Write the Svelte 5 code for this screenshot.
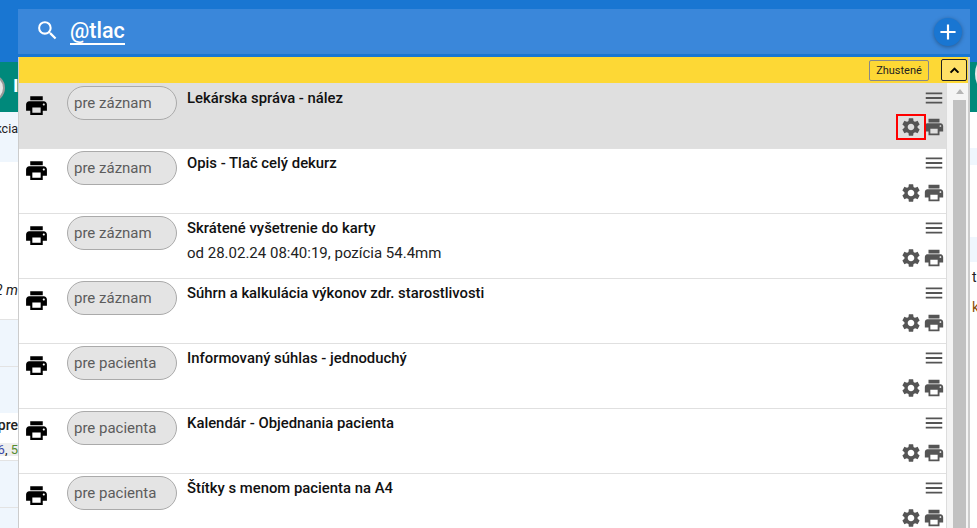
<script>
	const printer = 'M19 8H5c-1.66 0-3 1.34-3 3v6h4v4h12v-4h4v-6c0-1.66-1.34-3-3-3zm-3 11H8v-5h8v5zm3-7c-.55 0-1-.45-1-1s.45-1 1-1 1 .45 1 1-.45 1-1 1zm-1-9H6v4h12V3z';
	const gear = 'M19.14 12.94c.04-.3.06-.61.06-.94 0-.32-.02-.64-.07-.94l2.03-1.58c.18-.14.23-.41.12-.61l-1.92-3.32c-.12-.22-.37-.29-.59-.22l-2.39.96c-.5-.38-1.03-.7-1.62-.94l-.36-2.54c-.04-.24-.24-.41-.48-.41h-3.84c-.24 0-.43.17-.47.41l-.36 2.54c-.59.24-1.13.57-1.62.94l-2.39-.96c-.22-.08-.47 0-.59.22L2.74 8.87c-.12.21-.08.47.12.61l2.03 1.58c-.05.3-.09.63-.09.94s.02.64.07.94l-2.03 1.58c-.18.14-.23.41-.12.61l1.92 3.32c.12.22.37.29.59.22l2.39-.96c.5.38 1.03.7 1.62.94l.36 2.54c.05.24.24.41.48.41h3.84c.24 0 .44-.17.47-.41l.36-2.54c.59-.24 1.13-.56 1.62-.94l2.39.96c.22.08.47 0 .59-.22l1.92-3.32c.12-.22.07-.47-.12-.61l-2.01-1.58zM12 15.6c-1.98 0-3.6-1.62-3.6-3.6s1.62-3.6 3.6-3.6 3.6 1.62 3.6 3.6-1.62 3.6-3.6 3.6z';
	const menu = 'M3 18h18v-2H3v2zm0-5h18v-2H3v2zm0-7v2h18V6H3z';

	const rows = [
		{ tag: 'pre záznam', title: 'Lekárska správa - nález', active: true },
		{ tag: 'pre záznam', title: 'Opis - Tlač celý dekurz' },
		{ tag: 'pre záznam', title: 'Skrátené vyšetrenie do karty', sub: 'od 28.02.24 08:40:19, pozícia 54.4mm' },
		{ tag: 'pre záznam', title: 'Súhrn a kalkulácia výkonov zdr. starostlivosti' },
		{ tag: 'pre pacienta', title: 'Informovaný súhlas - jednoduchý' },
		{ tag: 'pre pacienta', title: 'Kalendár - Objednania pacienta' },
		{ tag: 'pre pacienta', title: 'Štítky s menom pacienta na A4' }
	];
</script>

<div class="page">
	<div class="backdrop">
		<div class="appbar"></div>
		<div class="teal">
			<span class="avatar"></span>
			<span class="initial">I</span>
			<span class="avatar-right"></span>
		</div>
		<div class="columns">
			<div class="col-left">
				<div class="cell blue h50 end top">Reakcia</div>
				<div class="cell h157 end italic">12 m</div>
				<div class="cell blue h47 line"></div>
				<div class="cell blue h47 line"></div>
				<div class="cell h30 end bold">pre</div>
				<div class="cell grey h13 end small"><span class="c1">6</span>,&nbsp;<span class="c2">5</span></div>
				<div class="cell h4"></div>
				<div class="cell blue h47 line"></div>
				<div class="cell blue h21 line"></div>
			</div>
			<div class="col-right">
				<div class="cell h36"></div>
				<div class="cell blue h17"></div>
				<div class="cell h72"></div>
				<div class="cell blue h25"></div>
				<div class="cell h30 letter">t</div>
				<div class="cell h30 letter brown">k</div>
			</div>
		</div>
	</div>

	<div class="overlay">
		<div class="search">
			<svg class="search-icon" viewBox="0 0 24 24"><path d="M15.5 14h-.79l-.28-.27A6.47 6.47 0 0 0 16 9.5 6.5 6.5 0 1 0 9.5 16c1.61 0 3.09-.59 4.23-1.57l.27.28v.79l5 4.99L20.49 19l-4.99-5zm-6 0C7.01 14 5 11.99 5 9.5S7.01 5 9.5 5 14 7.01 14 9.5 11.99 14 9.5 14z" /></svg>
			<span class="query">@tlac</span>
			<button class="add" aria-label="Pridať">
				<svg viewBox="0 0 24 24"><path d="M19 13h-6v6h-2v-6H5v-2h6V5h2v6h6v2z" /></svg>
			</button>
		</div>

		<div class="panel">
			<div class="toolbar">
				<button class="dense">Zhustené</button>
				<button class="collapse" aria-label="Zbaliť">
					<svg viewBox="0 0 24 24"><path d="M12 8l-6 6 1.41 1.41L12 10.83l4.59 4.58L18 14z" /></svg>
				</button>
			</div>
			<div class="content">
				<div class="list">
					{#each rows as row}
						<div class="row" class:active={row.active}>
							<svg class="print-main" viewBox="0 0 24 24"><path d={printer} /></svg>
							<span class="pill">{row.tag}</span>
							<div class="text">
								<div class="title">{row.title}</div>
								{#if row.sub}<div class="sub">{row.sub}</div>{/if}
							</div>
							<div class="actions">
								<svg class="tool menu" viewBox="0 0 24 24"><path d={menu} /></svg>
								<div class="tools">
									<span class="gear" class:marked={row.active}>
										<svg class="tool" viewBox="0 0 24 24"><path d={gear} /></svg>
									</span>
									<svg class="tool print" viewBox="0 0 24 24"><path d={printer} /></svg>
								</div>
							</div>
						</div>
					{/each}
				</div>
				<div class="scrollbar">
					<span class="arrow"></span>
					<div class="thumb"></div>
				</div>
			</div>
		</div>
	</div>
</div>

<style>
	:global(body) {
		margin: 0;
		font-family: Roboto, 'Liberation Sans', sans-serif;
	}

	.page {
		position: relative;
		height: 528px;
		overflow: hidden;
		background: #fff;
	}

	.appbar {
		height: 62px;
		background: #1976d2;
	}

	.teal {
		position: relative;
		height: 50px;
		background: #00897b;
	}

	.avatar {
		position: absolute;
		left: -23px;
		top: 12px;
		width: 24px;
		height: 24px;
		border: 2px solid #999;
		border-radius: 50%;
		background: #e6e6e6;
	}

	.avatar-right {
		position: absolute;
		right: -24px;
		top: -6px;
		width: 26px;
		height: 36px;
		border-radius: 50%;
		background: #e8e8e8;
	}

	.initial {
		position: absolute;
		left: 13px;
		top: 14px;
		color: #fff;
		font-size: 19px;
		font-weight: 700;
		line-height: 19px;
	}

	.columns {
		display: flex;
		justify-content: space-between;
		font-size: 12.5px;
	}

	.col-left {
		width: 18px;
	}

	.col-right {
		width: 7px;
	}

	.cell {
		display: flex;
		align-items: center;
		white-space: nowrap;
		overflow: hidden;
		box-sizing: border-box;
		color: #222;
	}

	.end {
		justify-content: flex-end;
	}

	.top {
		align-items: flex-start;
		padding-top: 9px;
	}

	.blue {
		background: #eff6fd;
	}

	.grey {
		background: #eee;
	}

	.line {
		border-top: 1px solid #e3e3e3;
	}

	.h4 { height: 4px; }
	.h13 { height: 13px; }
	.h17 { height: 17px; }
	.h21 { height: 21px; }
	.h25 { height: 25px; }
	.h30 { height: 30px; }
	.h36 { height: 36px; }
	.h47 { height: 47px; }
	.h50 { height: 50px; }
	.h72 { height: 72px; }
	.h157 { height: 157px; }

	.italic {
		align-items: flex-end;
		padding-bottom: 21px;
		font-size: 14px;
		font-style: italic;
	}

	.bold {
		align-items: flex-start;
		padding-top: 4px;
		font-weight: 500;
		font-size: 14px;
	}

	.small {
		font-size: 13px;
	}

	.c1 { color: #3949ab; }
	.c2 { color: #558b2f; }

	.letter {
		font-size: 14px;
		padding-left: 2px;
	}

	.brown {
		color: #8a4b08;
	}

	.overlay {
		position: absolute;
		left: 18px;
		top: 9px;
		bottom: 0;
		width: 952px;
		display: flex;
		flex-direction: column;
		gap: 3px;
	}

	.search {
		flex: none;
		height: 45px;
		display: flex;
		align-items: center;
		background: #3a87da;
		color: #fff;
	}

	.search-icon {
		width: 25px;
		height: 25px;
		margin: 0 10px 3px 17px;
		fill: #fff;
	}

	.query {
		font-size: 21.5px;
		font-weight: 500;
		line-height: 25px;
		border-bottom: 2px solid #fff;
	}

	.add {
		margin: 0 8px 0 auto;
		width: 28px;
		height: 28px;
		padding: 1px;
		border: 0;
		border-radius: 50%;
		background: #1976d2;
		box-shadow: 0 1px 4px rgba(0, 0, 0, 0.35);
	}

	.add svg {
		display: block;
		fill: #fff;
		width: 26px;
		height: 26px;
	}

	.panel {
		flex: 1;
		min-height: 0;
		display: flex;
		flex-direction: column;
		background: #fff;
		border-left: 1px solid #ccc;
		border-right: 2px solid #ccc;
	}

	.toolbar {
		flex: none;
		height: 26px;
		display: flex;
		align-items: center;
		justify-content: flex-end;
		gap: 12px;
		padding-right: 1px;
		background: #fdd835;
	}

	.dense {
		width: 60px;
		height: 21px;
		padding: 0;
		border: 1px solid #888;
		border-radius: 2px;
		background: #fdd835;
		color: #222;
		font: 400 11px Roboto, sans-serif;
	}

	.collapse {
		width: 26px;
		height: 22px;
		padding: 0;
		border: 1px solid #222;
		border-radius: 2px;
		background: #ffe066;
		display: flex;
		align-items: center;
		justify-content: center;
	}

	.collapse svg {
		width: 17px;
		height: 17px;
		stroke: #000;
		stroke-width: 1;
	}

	.content {
		flex: 1;
		min-height: 0;
		display: flex;
	}

	.list {
		width: 927px;
		flex: none;
		overflow: hidden;
		border-right: 1px solid #ddd;
	}

	.row {
		position: relative;
		height: 65px;
		box-sizing: border-box;
		display: flex;
		border-bottom: 1px solid #e0e0e0;
	}

	.row:first-child {
		height: 66px;
		padding-top: 1px;
	}

	.row.active {
		background: #dfdfdf;
	}

	.print-main {
		flex: none;
		width: 25px;
		height: 25px;
		margin: 8.5px 18px 0 5px;
	}

	.pill {
		flex: none;
		box-sizing: border-box;
		width: 110px;
		height: 34px;
		margin-top: 2px;
		padding-left: 6px;
		border: 1px solid #aaa;
		border-radius: 17px;
		background: #e4e4e4;
		color: #5c5c5c;
		font-size: 15px;
		line-height: 32px;
	}

	.text {
		flex: 1;
		min-width: 0;
		margin-left: 10px;
		padding-top: 4px;
	}

	.title {
		font-size: 14.85px;
		font-weight: 500;
		line-height: 20px;
		color: #111;
	}

	.sub {
		margin-top: 5px;
		font-size: 15px;
		line-height: 20px;
		color: #222;
	}

	.actions {
		flex: none;
		display: flex;
		flex-direction: column;
		align-items: flex-end;
	}

	.tool {
		display: block;
		width: 22px;
		height: 22px;
		fill: #555;
	}

	.menu {
		margin: 3px 1px 0 0;
	}

	.tools {
		display: flex;
		margin-top: 6px;
	}

	.row.active .tools {
		margin-top: 5px;
	}

	.gear {
		position: relative;
		z-index: 1;
		padding: 0 2px;
		border: 2px solid transparent;
	}

	.gear.marked {
		border-color: #f00;
	}

	.print {
		margin: 2px 1px 0 -3px;
	}

	.scrollbar {
		flex: 1;
		position: relative;
		padding: 17px 2px 0 6px;
		background: #f4f4f4;
	}

	.arrow {
		position: absolute;
		left: 9px;
		top: 6px;
		border: 4px solid transparent;
		border-top: 0;
		border-bottom: 5px solid #b5b5b5;
	}

	.thumb {
		height: 100%;
		background: #c1c1c1;
	}
</style>
